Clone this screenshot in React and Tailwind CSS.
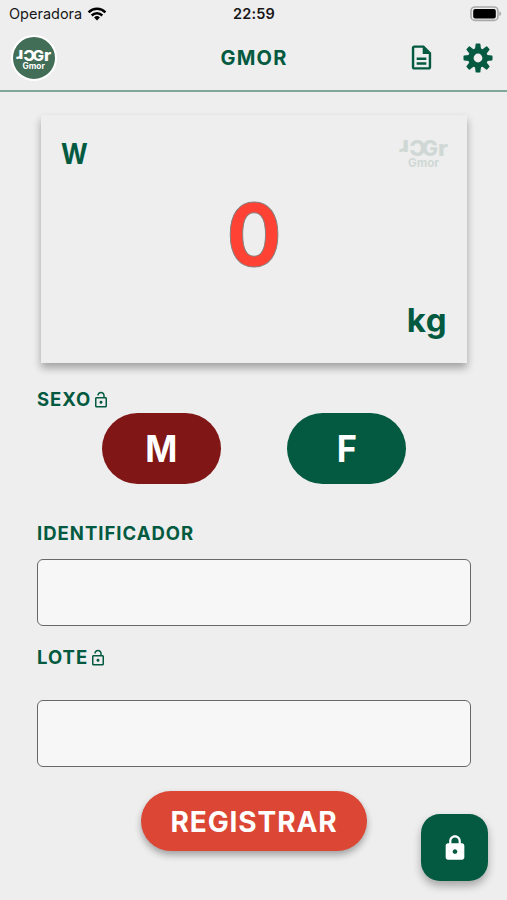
import React from 'react'
import { MdLock, MdOutlineDescription, MdOutlineLockOpen } from 'react-icons/md'

const toothAngles = [0, 45, 90, 135]

function GearIcon() {
  return (
    <svg viewBox="-15 -15 30 30" className="h-[30px] w-[30px]" fill="none">
      <circle r="7.2" stroke="#035a40" strokeWidth="5.6" />
      {toothAngles.map((angle) => (
        <g key={angle} transform={`rotate(${angle})`} fill="#035a40">
          <path d="M-3-9-2.4-13.9Q-2.2-14.5-1.6-14.5H1.6Q2.2-14.5 2.4-13.9L3-9Z" />
          <path d="M-3 9-2.4 13.9Q-2.2 14.5-1.6 14.5H1.6Q2.2 14.5 2.4 13.9L3 9Z" />
        </g>
      ))}
    </svg>
  )
}

function WifiIcon() {
  return (
    <svg viewBox="0 0 20 14" className="h-[14px] w-5" fill="none" stroke="#000" strokeWidth="2.5">
      <path d="M1.6 5.3a12 12 0 0 1 16.8 0" />
      <path d="M4.7 8.5a7.5 7.5 0 0 1 10.6 0" />
      <path d="M7.1 10.5a4.1 4.1 0 0 1 5.8 0L10 13.5Z" fill="#000" stroke="none" />
    </svg>
  )
}

function BatteryIcon() {
  return (
    <svg viewBox="0 0 32 16" className="h-4 w-8">
      <rect x="1" y="1" width="27" height="13.4" rx="4" fill="#eee" stroke="#a9a9a9" strokeWidth="1.6" />
      <rect x="3.2" y="3" width="22.6" height="9.4" rx="2" fill="#000" />
      <path d="M29.3 5.3Q31.2 6 31.2 7.7T29.3 10.1Z" fill="#a9a9a9" />
    </svg>
  )
}

// "Gr" with an upside-down "Cr" in front of it
function Wordmark({ className }) {
  return (
    <svg viewBox="0 0 50 30" className={`overflow-visible ${className}`} fill="currentColor" fontFamily="Inter, sans-serif">
      <g fontSize="21" fontWeight="800">
        <text x="23" y="17.5" textLength="16" lengthAdjust="spacingAndGlyphs">G</text>
        <text x="39" y="17.5" textLength="10" lengthAdjust="spacingAndGlyphs">r</text>
        <text transform="translate(26.5 2.4) rotate(180)" textLength="16" lengthAdjust="spacingAndGlyphs">C</text>
        <text transform="translate(10 2.4) rotate(180)" textLength="10" lengthAdjust="spacingAndGlyphs">r</text>
      </g>
      <text x="9" y="28.5" fontSize="11.5" fontWeight="700" textLength="31" lengthAdjust="spacingAndGlyphs">Gmor</text>
    </svg>
  )
}

function StatusBar() {
  return (
    <div className="flex h-7 items-center justify-between pr-[5px] pl-[9px] text-[#171717]">
      <div className="flex w-[120px] items-center gap-[5px] text-[14.5px]">
        Operadora
        <WifiIcon />
      </div>
      <span className="-ml-[3px] text-[14.5px] font-semibold tracking-[0.2px]">22:59</span>
      <div className="flex w-[120px] justify-end">
        <BatteryIcon />
      </div>
    </div>
  )
}

function Header() {
  return (
    <header className="flex h-[64px] items-center justify-between border-b-2 border-[#7fa898] pr-[14px] pb-[3px] pl-[11px]">
      <div className="w-[126px]">
        <div className="flex h-[46px] w-[46px] items-center justify-center rounded-full border-2 border-white bg-[#426e58] text-white">
          <Wordmark className="mt-[2px] h-[22px] w-[36px]" />
        </div>
      </div>
      <h1 className="ml-[4px] text-[20px] font-bold tracking-[1.2px]">GMOR</h1>
      <div className="flex w-[126px] items-center justify-end gap-[27px]">
        <MdOutlineDescription size={29} />
        <GearIcon />
      </div>
    </header>
  )
}

function FieldLabel({ text, lock }) {
  return (
    <div className="flex h-6 items-center gap-[1px] text-[18.5px] font-bold tracking-[1px]">
      {text}
      {lock && <MdOutlineLockOpen size={18} />}
    </div>
  )
}

export default function App() {
  return (
    <div className="relative h-[900px] w-[507px] overflow-hidden bg-[#eee] font-[Inter,sans-serif] text-[#035a40]">
      <StatusBar />
      <Header />

      <main className="px-[37px] pt-[23px]">
        {/* Weight reading */}
        <section className="ml-1 flex h-[248px] w-[426px] flex-col justify-between bg-[#eee] px-5 pt-[21px] pb-[21px] shadow-[0_5px_8px_rgba(0,0,0,0.32)]">
          <div className="flex h-9 items-start justify-between">
            <span className="origin-left scale-x-[0.92] text-[28px] leading-9 font-bold">W</span>
            <Wordmark className="mt-[2px] -mr-0.5 h-[30px] w-[50px] text-[#d0d8d5]" />
          </div>
          <div className="scale-x-[0.94] text-center text-[87px] leading-[86px] font-bold text-[#ff4234] [-webkit-text-stroke:1px_#85817f]">
            0
          </div>
          <div className="text-right text-[33px] leading-[44px] font-bold tracking-[0.5px]">kg</div>
        </section>

        <div className="mt-[25px]">
          <FieldLabel text="SEXO" lock />
        </div>
        <div className="mt-[1px] flex gap-[66px] pl-[65px] text-[37px] font-bold text-white">
          <button className="h-[71px] w-[119px] rounded-full bg-[#801616]">
            <span className="inline-block scale-x-[0.93]">M</span>
          </button>
          <button className="h-[71px] w-[119px] rounded-full bg-[#035a40]">
            <span className="inline-block scale-x-[0.93]">F</span>
          </button>
        </div>

        <div className="mt-[38px]">
          <FieldLabel text="IDENTIFICADOR" />
        </div>
        <input className="mt-[13px] block h-[67px] w-[434px] rounded-[6px] border border-[#686868] bg-[#f7f7f7] px-4" />

        <div className="mt-[20px]">
          <FieldLabel text="LOTE" lock />
        </div>
        <input className="mt-[30px] block h-[67px] w-[434px] rounded-[6px] border border-[#686868] bg-[#f7f7f7] px-4" />

        <button className="mt-6 ml-[104px] block h-[60px] w-[226px] rounded-full bg-[#db4635] pt-px text-[28px] font-bold tracking-[0.9px] text-white shadow-[0_4px_7px_rgba(0,0,0,0.32)]">
          REGISTRAR
        </button>
      </main>

      {/* Floating lock toggle */}
      <button className="absolute top-[814px] left-[421px] flex h-[67px] w-[67px] items-center justify-center rounded-[19px] bg-[#035a40] text-white shadow-[0_5px_8px_rgba(0,0,0,0.3)]">
        <MdLock size={28} />
      </button>
    </div>
  )
}
